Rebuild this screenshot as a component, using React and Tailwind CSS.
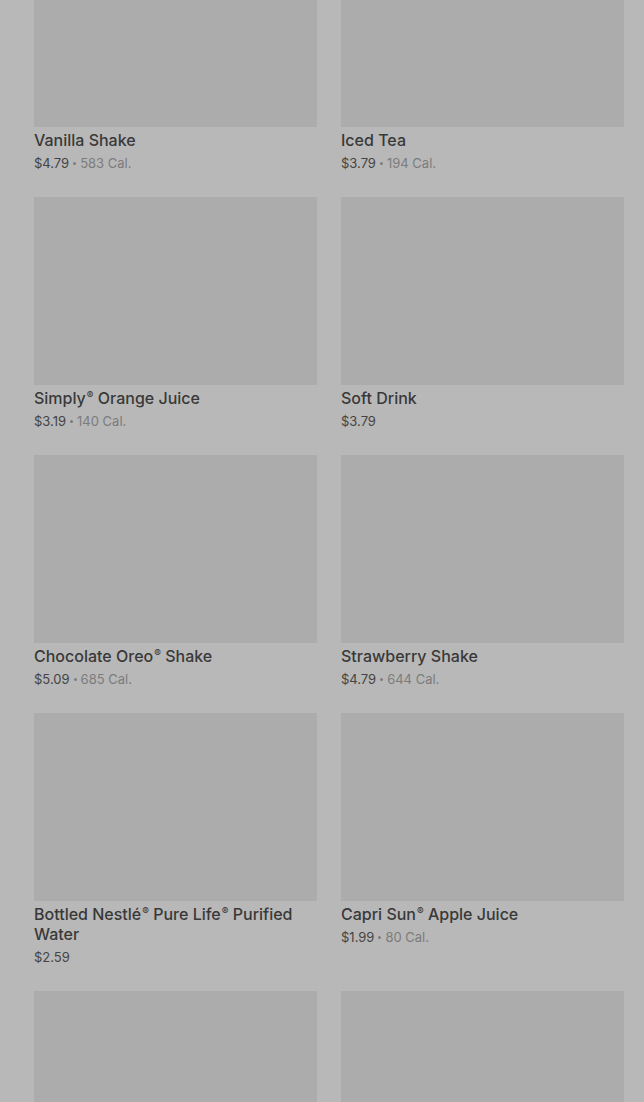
import React from "react";

const items = [
  { name: "Vanilla Shake", price: "$4.79", cal: "583 Cal." },
  { name: "Iced Tea", price: "$3.79", cal: "194 Cal." },
  { name: "Simply® Orange Juice", price: "$3.19", cal: "140 Cal." },
  { name: "Soft Drink", price: "$3.79" },
  { name: "Chocolate Oreo® Shake", price: "$5.09", cal: "685 Cal." },
  { name: "Strawberry Shake", price: "$4.79", cal: "644 Cal." },
  { name: "Bottled Nestlé® Pure Life® Purified Water", price: "$2.59" },
  { name: "Capri Sun® Apple Juice", price: "$1.99", cal: "80 Cal." },
  { name: "", price: "" },
  { name: "", price: "" },
];

// raised ® without stretching the line box
const Name = ({ text }) => {
  const parts = text.split("®");
  return (
    <>
      {parts.map((p, i) => (
        <React.Fragment key={i}>
          {p}
          {i < parts.length - 1 && (
            <span className="inline-block align-top text-[10px] leading-[14px] ml-[1px]">®</span>
          )}
        </React.Fragment>
      ))}
    </>
  );
};

const Card = ({ item }) => (
  <div className="flex flex-col">
    <div className="h-[188px] w-full bg-[#acacac]" />
    {item.name && (
      <>
        <h3 className="mt-[3px] text-[16px] leading-5 font-medium text-[#393939]">
          <Name text={item.name} />
        </h3>
        <p className="mt-[3px] flex items-center text-[13px] leading-5 text-[#444]">
          {item.price}
          {item.cal && (
            <>
              <span className="mx-[4px] inline-block h-[3px] w-[3px] rounded-full bg-[#7c7c7c]" />
              <span className="text-[#7c7c7c]">{item.cal}</span>
            </>
          )}
        </p>
      </>
    )}
  </div>
);

export default function App() {
  return (
    <div
      className="min-h-screen bg-[#b8b8b8] overflow-hidden"
      style={{ fontFamily: "Inter, 'Noto Sans', sans-serif" }}
    >
      <div className="-mt-[61px] grid grid-cols-2 gap-x-6 gap-y-6 pl-[34px] pr-[20px]">
        {items.map((it, i) => (
          <Card key={i} item={it} />
        ))}
      </div>
    </div>
  );
}
